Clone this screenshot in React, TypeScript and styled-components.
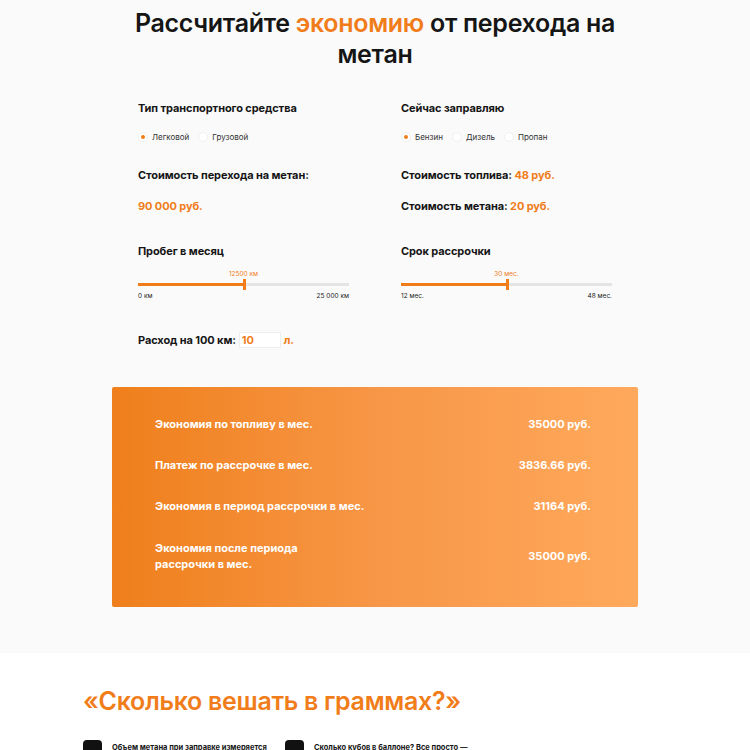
import React, { useState } from 'react';
import styled, { createGlobalStyle } from 'styled-components';

const ORANGE = '#f07d1a';

const GlobalStyle = createGlobalStyle`
  html, body {
    margin: 0;
    padding: 0;
    background: #ffffff;
    font-family: Inter, "Noto Sans", sans-serif;
    color: #151515;
  }
  * { box-sizing: border-box; }
`;

const CalcSection = styled.section`
  background: #fafafa;
  padding: 8px 0 46px;
`;

const Title = styled.h1`
  margin: 0 auto;
  width: 520px;
  text-align: center;
  font-size: 25px;
  line-height: 31px;
  font-weight: 600;
  letter-spacing: -0.3px;
`;

const Accent = styled.span`
  color: ${ORANGE};
`;

const Form = styled.div`
  width: 474px;
  margin: 31px auto 0;
  display: grid;
  grid-template-columns: 211px 211px;
  column-gap: 52px;
`;

const Field = styled.div<{ $mb?: number }>`
  display: flex;
  flex-direction: column;
  margin-bottom: ${p => p.$mb ?? 0}px;
`;

const Label = styled.div<{ $mt?: number }>`
  font-size: 11px;
  font-weight: 700;
  line-height: 14px;
  letter-spacing: -0.1px;
  margin-top: ${p => p.$mt ?? 0}px;
`;

const Value = styled.span`
  color: ${ORANGE};
  font-weight: 700;
`;

const Radios = styled.div`
  display: flex;
  gap: 9px;
  margin-top: 17px;
`;

const RadioItem = styled.label`
  display: flex;
  align-items: center;
  gap: 4px;
  font-size: 8px;
  color: #333;
  cursor: pointer;
`;

const RadioDot = styled.span<{ $on: boolean }>`
  width: 10px;
  height: 10px;
  border-radius: 50%;
  background: #fff;
  border: 1px solid #f0f0f0;
  display: flex;
  align-items: center;
  justify-content: center;
  &::after {
    content: '';
    width: 4px;
    height: 4px;
    border-radius: 50%;
    background: ${p => (p.$on ? ORANGE : 'transparent')};
  }
`;

const SliderWrap = styled.div`
  margin-top: 12px;
  display: flex;
  flex-direction: column;
`;

const SliderTop = styled.div`
  position: relative;
  height: 9px;
`;

const SliderValue = styled.div`
  position: absolute;
  top: 0;
  transform: translateX(-50%);
  font-size: 6.5px;
  color: ${ORANGE};
  white-space: nowrap;
`;

const Track = styled.div`
  position: relative;
  height: 3px;
  background: #e4e4e4;
  margin-top: 4px;
`;

const Fill = styled.div`
  position: absolute;
  left: 0;
  top: 0;
  bottom: 0;
  background: ${ORANGE};
`;

const Thumb = styled.div`
  position: absolute;
  top: -4px;
  width: 3px;
  height: 11px;
  background: ${ORANGE};
  transform: translateX(-1px);
`;

const SliderEnds = styled.div`
  display: flex;
  justify-content: space-between;
  margin-top: 6px;
  font-size: 6.5px;
  color: #222;
`;

const InlineRow = styled.div`
  grid-column: 1 / span 2;
  display: flex;
  align-items: center;
  gap: 3px;
  margin-top: 32px;
`;

const NumInput = styled.input`
  width: 42px;
  height: 16px;
  border: 1px solid #eeeeee;
  background: #fff;
  color: ${ORANGE};
  font-family: inherit;
  font-size: 11px;
  font-weight: 700;
  padding: 0 2px;
  outline: none;
`;

const Card = styled.div`
  width: 526px;
  margin: 39px auto 0;
  padding: 16px 47px 23px 43px;
  border-radius: 2px;
  background: linear-gradient(90deg, #ef7f1b 0%, #f79646 50%, #ffa95c 100%);
  color: #fff;
  display: flex;
  flex-direction: column;
`;

const ResultRow = styled.div`
  display: flex;
  justify-content: space-between;
  align-items: center;
  min-height: 41px;
  font-size: 11px;
  font-weight: 700;
  line-height: 16px;
  &:last-child {
    min-height: 56px;
    margin-top: 2px;
  }
`;

const ResultName = styled.div<{ $w?: number }>`
  max-width: ${p => p.$w ?? 260}px;
`;

const InfoSection = styled.section`
  background: #fff;
  padding: 33px 83px 0;
  height: 98px;
  overflow: hidden;
`;

const InfoTitle = styled.h2`
  margin: 0;
  font-size: 25px;
  font-weight: 600;
  letter-spacing: -0.3px;
  color: ${ORANGE};
`;

const Steps = styled.div`
  display: flex;
  margin-top: 24px;
`;

const Step = styled.div`
  width: 202px;
  display: flex;
  gap: 10px;
`;

const StepNum = styled.div`
  width: 19px;
  height: 19px;
  flex: none;
  border-radius: 4px;
  background: #111;
  color: #fff;
  font-size: 8px;
  font-weight: 700;
  display: flex;
  align-items: flex-end;
  justify-content: center;
  padding-bottom: 1px;
`;

const StepText = styled.div`
  font-size: 7.5px;
  font-weight: 700;
  line-height: 11px;
  padding-top: 2px;
`;

type SliderProps = { pct: number; value: string; min: string; max: string };

const Slider: React.FC<SliderProps> = ({ pct, value, min, max }) => (
  <SliderWrap>
    <SliderTop>
      <SliderValue style={{ left: `${pct}%` }}>{value}</SliderValue>
    </SliderTop>
    <Track>
      <Fill style={{ width: `${pct}%` }} />
      <Thumb style={{ left: `${pct}%` }} />
    </Track>
    <SliderEnds>
      <span>{min}</span>
      <span>{max}</span>
    </SliderEnds>
  </SliderWrap>
);

const App: React.FC = () => {
  const [vehicle, setVehicle] = useState('car');
  const [fuel, setFuel] = useState('petrol');

  const vehicles = [
    { id: 'car', label: 'Легковой' },
    { id: 'truck', label: 'Грузовой' },
  ];
  const fuels = [
    { id: 'petrol', label: 'Бензин' },
    { id: 'diesel', label: 'Дизель' },
    { id: 'propane', label: 'Пропан' },
  ];

  return (
    <>
      <GlobalStyle />
      <CalcSection>
        <Title>
          Рассчитайте <Accent>экономию</Accent> от перехода на метан
        </Title>
        <Form>
          <Field $mb={26}>
            <Label>Тип транспортного средства</Label>
            <Radios>
              {vehicles.map(v => (
                <RadioItem key={v.id} onClick={() => setVehicle(v.id)}>
                  <RadioDot $on={vehicle === v.id} />
                  {v.label}
                </RadioItem>
              ))}
            </Radios>
          </Field>
          <Field $mb={26}>
            <Label>Сейчас заправляю</Label>
            <Radios>
              {fuels.map(f => (
                <RadioItem key={f.id} onClick={() => setFuel(f.id)}>
                  <RadioDot $on={fuel === f.id} />
                  {f.label}
                </RadioItem>
              ))}
            </Radios>
          </Field>

          <Field $mb={31}>
            <Label>Стоимость перехода на метан:</Label>
            <Label $mt={17}>
              <Value>90 000 руб.</Value>
            </Label>
          </Field>
          <Field $mb={31}>
            <Label>
              Стоимость топлива: <Value>48 руб.</Value>
            </Label>
            <Label $mt={17}>
              Стоимость метана: <Value>20 руб.</Value>
            </Label>
          </Field>

          <Field>
            <Label>Пробег в месяц</Label>
            <Slider pct={50} value="12500 км" min="0 км" max="25 000 км" />
          </Field>
          <Field>
            <Label>Срок рассрочки</Label>
            <Slider pct={50} value="30 мес." min="12 мес." max="48 мес." />
          </Field>

          <InlineRow>
            <Label>Расход на 100 км:</Label>
            <NumInput defaultValue="10" />
            <Label>
              <Value>л.</Value>
            </Label>
          </InlineRow>
        </Form>

        <Card>
          <ResultRow>
            <ResultName>Экономия по топливу в мес.</ResultName>
            <span>35000 руб.</span>
          </ResultRow>
          <ResultRow>
            <ResultName>Платеж по рассрочке в мес.</ResultName>
            <span>3836.66 руб.</span>
          </ResultRow>
          <ResultRow>
            <ResultName>Экономия в период рассрочки в мес.</ResultName>
            <span>31164 руб.</span>
          </ResultRow>
          <ResultRow>
            <ResultName $w={150}>Экономия после периода рассрочки в мес.</ResultName>
            <span>35000 руб.</span>
          </ResultRow>
        </Card>
      </CalcSection>

      <InfoSection>
        <InfoTitle>«Сколько вешать в граммах?»</InfoTitle>
        <Steps>
          <Step>
            <StepNum>1</StepNum>
            <StepText>Объем метана при заправке измеряется</StepText>
          </Step>
          <Step>
            <StepNum>2</StepNum>
            <StepText>Сколько кубов в баллоне? Все просто —</StepText>
          </Step>
        </Steps>
      </InfoSection>
    </>
  );
};

export default App;
